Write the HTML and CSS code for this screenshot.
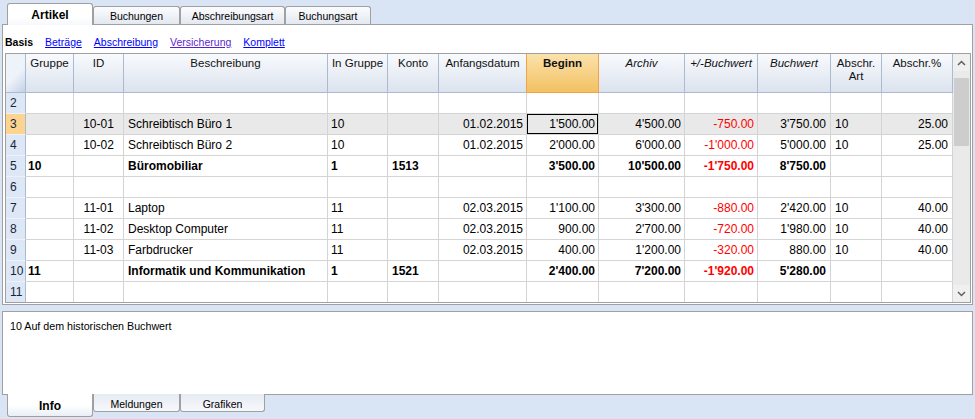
FILE: index.html
```html
<!DOCTYPE html>
<html lang="de">
<head>
<meta charset="utf-8">
<title>Artikel</title>
<link rel="stylesheet" href="styles.css">
</head>
<body>
<div class="app">
  <div class="tabs-top">
    <div class="tab active t1">Artikel</div>
    <div class="tab t2">Buchungen</div>
    <div class="tab t3">Abschreibungsart</div>
    <div class="tab t4">Buchungsart</div>
  </div>

  <div class="panel">
    <div class="toolbar">
      <span class="basis">Basis</span>
      <a href="#">Beträge</a>
      <a href="#">Abschreibung</a>
      <a href="#" class="visited">Versicherung</a>
      <a href="#">Komplett</a>
    </div>

    <div class="gridbox">
      <div class="sheet">
        <div class="row hdr">
          <div class="corner"></div>
          <div>Gruppe</div>
          <div>ID</div>
          <div>Beschreibung</div>
          <div>In Gruppe</div>
          <div>Konto</div>
          <div>Anfangsdatum</div>
          <div class="beginn">Beginn</div>
          <div class="it">Archiv</div>
          <div class="it">+/-Buchwert</div>
          <div class="it">Buchwert</div>
          <div>Abschr.<br>Art</div>
          <div>Abschr.%</div>
        </div>

        <div class="row"><div class="rh">2</div><div></div><div></div><div></div><div></div><div></div><div></div><div></div><div></div><div></div><div></div><div></div><div></div></div>

        <div class="row sel"><div class="rh">3</div><div></div><div>10-01</div><div>Schreibtisch Büro 1</div><div>10</div><div></div><div>01.02.2015</div><div class="focus">1'500.00</div><div>4'500.00</div><div>-750.00</div><div>3'750.00</div><div>10</div><div>25.00</div></div>

        <div class="row"><div class="rh">4</div><div></div><div>10-02</div><div>Schreibtisch Büro 2</div><div>10</div><div></div><div>01.02.2015</div><div>2'000.00</div><div>6'000.00</div><div>-1'000.00</div><div>5'000.00</div><div>10</div><div>25.00</div></div>

        <div class="row b"><div class="rh">5</div><div>10</div><div></div><div>Büromobiliar</div><div>1</div><div>1513</div><div></div><div>3'500.00</div><div>10'500.00</div><div>-1'750.00</div><div>8'750.00</div><div></div><div></div></div>

        <div class="row"><div class="rh">6</div><div></div><div></div><div></div><div></div><div></div><div></div><div></div><div></div><div></div><div></div><div></div><div></div></div>

        <div class="row"><div class="rh">7</div><div></div><div>11-01</div><div>Laptop</div><div>11</div><div></div><div>02.03.2015</div><div>1'100.00</div><div>3'300.00</div><div>-880.00</div><div>2'420.00</div><div>10</div><div>40.00</div></div>

        <div class="row"><div class="rh">8</div><div></div><div>11-02</div><div>Desktop Computer</div><div>11</div><div></div><div>02.03.2015</div><div>900.00</div><div>2'700.00</div><div>-720.00</div><div>1'980.00</div><div>10</div><div>40.00</div></div>

        <div class="row"><div class="rh">9</div><div></div><div>11-03</div><div>Farbdrucker</div><div>11</div><div></div><div>02.03.2015</div><div>400.00</div><div>1'200.00</div><div>-320.00</div><div>880.00</div><div>10</div><div>40.00</div></div>

        <div class="row b"><div class="rh">10</div><div>11</div><div></div><div>Informatik und Kommunikation</div><div>1</div><div>1521</div><div></div><div>2'400.00</div><div>7'200.00</div><div>-1'920.00</div><div>5'280.00</div><div></div><div></div></div>

        <div class="row"><div class="rh">11</div><div></div><div></div><div></div><div></div><div></div><div></div><div></div><div></div><div></div><div></div><div></div><div></div></div>
      </div>

      <div class="vscroll">
        <div class="sbtn">
          <svg width="9" height="6" viewBox="0 0 9 6"><polyline points="1,5 4.5,1.5 8,5" fill="none" stroke="#606060" stroke-width="1.5"/></svg>
        </div>
        <div class="thumb"></div>
        <div class="sfill"></div>
        <div class="sbtn">
          <svg width="9" height="6" viewBox="0 0 9 6"><polyline points="1,1 4.5,4.5 8,1" fill="none" stroke="#606060" stroke-width="1.5"/></svg>
        </div>
      </div>
    </div>
  </div>

  <div class="info">10 Auf dem historischen Buchwert</div>

  <div class="tabs-bottom">
    <div class="btab active b1">Info</div>
    <div class="btab b2">Meldungen</div>
    <div class="btab b3">Grafiken</div>
  </div>
</div>
</body>
</html>
```

FILE: styles.css
```css
* { box-sizing: border-box; }

body {
  margin: 0;
  width: 975px;
  height: 419px;
  overflow: hidden;
  background: #d9e4f5;
  font-family: "Liberation Sans", Arial, sans-serif;
  color: #000;
}

.app {
  display: flex;
  flex-direction: column;
  height: 419px;
}

/* top tabs */
.tabs-top {
  display: flex;
  align-items: flex-end;
  height: 24px;
  padding-left: 7px;
  position: relative;
  z-index: 2;
}

.tab {
  height: 18px;
  border: 1px solid #a0a0a0;
  border-bottom: none;
  border-radius: 3px 3px 0 0;
  background: linear-gradient(#fbfcfe, #e3e8f0);
  font-size: 10.5px;
  line-height: 15px;
  padding-top: 2px;
  text-align: center;
}

.tab.active {
  height: 22px;
  margin-bottom: -1px;
  background: linear-gradient(#ffffff 60%, #f6f8fb);
  font-size: 12px;
  font-weight: bold;
  line-height: 20px;
  padding-top: 1px;
}

.t1 { width: 86px; }
.t2 { width: 87px; }
.t3 { width: 105px; }
.t4 { width: 86px; }

/* main panel */
.panel {
  margin: 0 2px;
  height: 281px;
  border: 1px solid #a0a0a0;
  background: #fff;
  padding: 0 1px 1px 2px;
  display: flex;
  flex-direction: column;
}

.toolbar {
  height: 28px;
  flex: none;
  display: flex;
  align-items: center;
  gap: 12px;
  padding-top: 6px;
  font-size: 10.5px;
}

.basis { font-weight: bold; }

.toolbar a {
  color: #0000ff;
  text-decoration: underline;
}

.toolbar a.visited { color: #5a1fd0; }

.gridbox {
  height: 250px;
  flex: none;
  border: 1px solid #a0a0a0;
  display: flex;
  overflow: hidden;
}

.sheet {
  width: 947px;
  flex: none;
  display: grid;
  grid-template-columns: 20px 48px 50px 204px 60px 51px 88px 72px 86px 73px 73px 51px 71px;
  grid-template-rows: 39px repeat(10, 21px);
  align-content: start;
}

.row { display: contents; }

.row > div {
  border-right: 1px solid #d4d4d4;
  border-bottom: 1px solid #d4d4d4;
  font-size: 12px;
  line-height: 20px;
  padding: 0 3px;
  white-space: nowrap;
  overflow: hidden;
}

.row > div:nth-child(2) { padding-left: 2px; }
.row > div:nth-child(3) { text-align: center; }
.row > div:nth-child(4) { padding-left: 4px; }
.row > div:nth-child(6) { padding-left: 4px; }
.row > div:nth-child(7),
.row > div:nth-child(8),
.row > div:nth-child(9),
.row > div:nth-child(10),
.row > div:nth-child(11) { text-align: right; }
.row > div:nth-child(10) { color: #ff0000; }
.row > div:nth-child(11) { padding-right: 4px; }
.row > div:nth-child(12) { padding-left: 4px; }
.row > div:nth-child(13) { text-align: right; padding-right: 4px; }

.row.b > div:not(.rh) { font-weight: bold; }

.row.sel > div { background: #e9e9e9; }

.row > .rh {
  background: #dde7f5;
  border-right: 1px solid #a9bad1;
  border-bottom: 1px solid #edf2f9;
  padding-left: 4px;
  color: #18263a;
}

.row.sel > .rh { background: #fdd48f; }

.row > .focus { box-shadow: inset 0 0 0 1px #000; }

/* header row */
.row.hdr > div {
  background: linear-gradient(#f8fafd, #dce3ee);
  border-right: 1px solid #a9bad1;
  border-bottom: 1px solid #a9bad1;
  font-size: 11.5px;
  line-height: 13px;
  padding: 3px 1px 0;
  text-align: center;
  color: #111;
  white-space: normal;
}

.row.hdr > .corner {
  background: linear-gradient(135deg, #eef3fa 55%, #c3d1e5);
}

.row.hdr > .beginn {
  background: linear-gradient(#fbe2ab, #f2c162);
  border-right-color: #efa44a;
  border-bottom-color: #efa44a;
  box-shadow: -1px 0 0 #efa44a;
  font-weight: bold;
}

.row.hdr > .it { font-style: italic; }

/* scrollbar */
.vscroll {
  width: 17px;
  flex: none;
  background: #eaeaea;
  display: flex;
  flex-direction: column;
}

.sbtn {
  height: 17px;
  flex: none;
  background: #f0f0f0;
  display: flex;
  align-items: center;
  justify-content: center;
}

.thumb {
  height: 68px;
  flex: none;
  margin: 7px 1px 0;
  background: #cdcdcd;
}

.sfill { flex: 1; }

/* info panel */
.info {
  margin: 6px 2px 0;
  height: 84px;
  flex: none;
  border: 1px solid #a0a0a0;
  background: #fff;
  padding: 8px 7px 0;
  font-size: 10.7px;
  line-height: 13px;
}

/* bottom tabs */
.tabs-bottom {
  display: flex;
  align-items: flex-start;
  padding-left: 7px;
  margin-top: -1px;
  position: relative;
  z-index: 2;
}

.btab {
  height: 18px;
  border: 1px solid #a0a0a0;
  border-top: none;
  border-radius: 0 0 3px 3px;
  background: linear-gradient(#e6ebf3, #f6f8fb);
  font-size: 10.5px;
  line-height: 14px;
  padding-top: 3px;
  text-align: center;
}

.btab.active {
  height: 23px;
  background: linear-gradient(#ffffff 50%, #eaeff6);
  font-size: 12px;
  font-weight: bold;
  line-height: 20px;
  padding-top: 2px;
}

.b1 { width: 86px; }
.b2 { width: 87px; }
.b3 { width: 85px; }
```
